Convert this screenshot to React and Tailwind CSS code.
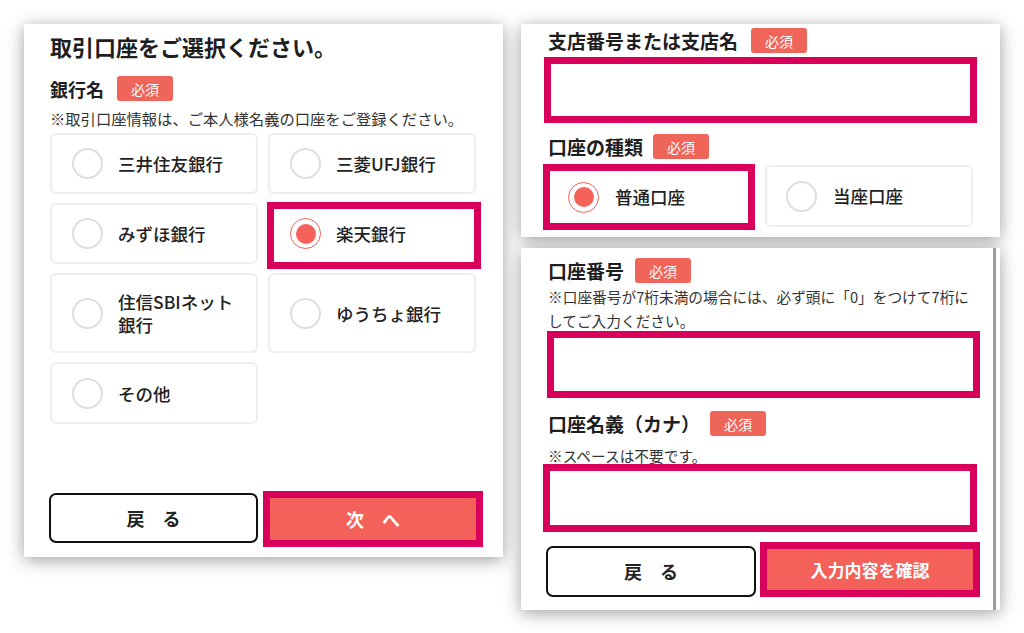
import React from "react";

const FONT = { fontFamily: '"Noto Sans CJK JP", "Noto Sans", sans-serif' };

function Badge() {
  return (
    <span className="inline-flex items-center justify-center w-[56px] h-[25px] rounded-[3px] bg-[#f0655a] text-white text-[14px] leading-none font-normal">
      必須
    </span>
  );
}

function Radio({ checked }) {
  if (checked) {
    return (
      <span className="shrink-0 flex items-center justify-center w-[31px] h-[31px] rounded-full border-[1.5px] border-[#f0645a] bg-white">
        <span className="w-[20px] h-[20px] rounded-full bg-[#f4625a]" />
      </span>
    );
  }
  return <span className="shrink-0 w-[31px] h-[31px] rounded-full border-2 border-[#dedede] bg-white" />;
}

function Card({ children, checked, h }) {
  return (
    <div className={`relative flex items-center pl-[20px] rounded-[6px] border-2 border-[#eeeeee] bg-white ${h}`}>
      <Radio checked={checked} />
      <span className="ml-[15px] text-[17.5px] leading-[23px] font-medium text-[#222]">{children}</span>
      {checked && (
        <div className="absolute left-[-3px] top-[-3px] right-[-7px] bottom-[-7px] border-[7px] border-[#d8005a]" />
      )}
    </div>
  );
}

function Label({ children, size = "text-[18px]", gap = "ml-[13px]" }) {
  return (
    <div className="flex items-center h-[25px]">
      <span className={`${size} font-bold leading-none text-[#1e1e1e]`}>{children}</span>
      <span className={gap}>
        <Badge />
      </span>
    </div>
  );
}

function PinkInput({ cls }) {
  return <div className={`border-[7px] border-[#d8005a] bg-white ${cls}`} />;
}

export default function App() {
  return (
    <div className="relative w-[1024px] h-[633px] bg-white overflow-hidden" style={FONT}>
      {/* Left panel */}
      <div className="absolute left-[24px] top-[24px] w-[479px] h-[533px] bg-white shadow-[0_3px_16px_rgba(0,0,0,0.38)] pl-[26px] pt-[8px] flex flex-col">
        <div className="text-[22px] leading-[28px] font-bold text-[#1e1e1e]">取引口座をご選択ください。</div>
        <div className="mt-[16px]">
          <Label>銀行名</Label>
        </div>
        <div className="mt-[7px] text-[15.3px] leading-[20px] text-[#333] whitespace-nowrap">
          ※取引口座情報は、ご本人様名義の口座をご登録ください。
        </div>
        <div className="mt-[5px] w-[426px] grid grid-cols-2 gap-x-[10px] gap-y-[9px]">
          <Card h="h-[61px]">三井住友銀行</Card>
          <Card h="h-[61px]">三菱UFJ銀行</Card>
          <Card h="h-[61px]">みずほ銀行</Card>
          <Card h="h-[61px]" checked>楽天銀行</Card>
          <Card h="h-[80px]">
            住信SBIネット
            <br />
            銀行
          </Card>
          <Card h="h-[80px]">ゆうちょ銀行</Card>
          <Card h="h-[62px]">その他</Card>
        </div>
        <div className="mt-[69px] w-[426px] grid grid-cols-2 gap-x-[10px]">
          <button className="ml-[-1px] h-[50px] rounded-[7px] border-[2.5px] border-[#111] bg-white text-[18px] font-bold text-[#222]">
            戻　る
          </button>
          <div className="ml-[-5px] mr-[-7px] mt-[-2px] h-[56px] border-[7px] border-[#d8005a] bg-[#f4615a] flex items-center justify-center text-white text-[18px] font-bold">
            次　へ
          </div>
        </div>
      </div>

      {/* Right top panel */}
      <div className="absolute left-[521px] top-[24px] w-[479px] h-[213px] bg-white shadow-[0_3px_16px_rgba(0,0,0,0.38)] pl-[27px] pt-[4px] flex flex-col">
        <Label size="text-[19px]">支店番号または支店名</Label>
        <PinkInput cls="mt-[4px] ml-[-4px] w-[433px] h-[66px]" />
        <div className="mt-[11px]">
          <Label size="text-[19px]" gap="ml-[10px]">口座の種類</Label>
        </div>
        <div className="mt-[5px] flex items-start">
          <div className="ml-[-5px] w-[212px] h-[66px] border-[7px] border-[#d8005a] bg-white flex items-center pl-[18px]">
            <Radio checked />
            <span className="ml-[16px] text-[17.5px] font-medium text-[#222]">普通口座</span>
          </div>
          <div className="ml-[10px] mt-[1px] w-[208px] h-[62px] rounded-[6px] border-2 border-[#eeeeee] flex items-center pl-[19px]">
            <Radio />
            <span className="ml-[16px] text-[17.5px] font-medium text-[#222]">当座口座</span>
          </div>
        </div>
      </div>

      {/* Right bottom panel */}
      <div className="absolute left-[521px] top-[248px] w-[479px] h-[362px] bg-white shadow-[0_3px_16px_rgba(0,0,0,0.38)] pr-[4px]">
        <div className="h-full border-r-[3px] border-[#9c9c9c] pl-[27px] pt-[10px] flex flex-col">
          <Label size="text-[19px]" gap="ml-[11px]">口座番号</Label>
          <div className="mt-[2px] text-[14.7px] leading-[24px] text-[#333] whitespace-nowrap">
            ※口座番号が7桁未満の場合には、必ず頭に「0」をつけて7桁に
            <br />
            してご入力ください。
          </div>
          <PinkInput cls="mt-[-2px] ml-[-1px] w-[433px] h-[67px]" />
          <div className="mt-[13px]">
            <Label size="text-[19px]" gap="ml-[10px]">口座名義（カナ）</Label>
          </div>
          <div className="mt-[12px] text-[14.7px] leading-[16px] text-[#333]">※スペースは不要です。</div>
          <PinkInput cls="mt-[0px] ml-[-5px] w-[434px] h-[68px]" />
          <div className="mt-[10px] flex items-start">
            <button className="ml-[-2px] mt-[4px] w-[210px] h-[51px] rounded-[7px] border-[2.5px] border-[#111] bg-white text-[18px] font-bold text-[#222]">
              戻　る
            </button>
            <div className="ml-[4px] w-[220px] h-[55px] border-[7px] border-[#d8005a] bg-[#f4615a] flex items-center justify-center text-white text-[17px] font-bold">
              入力内容を確認
            </div>
          </div>
        </div>
      </div>
    </div>
  );
}
